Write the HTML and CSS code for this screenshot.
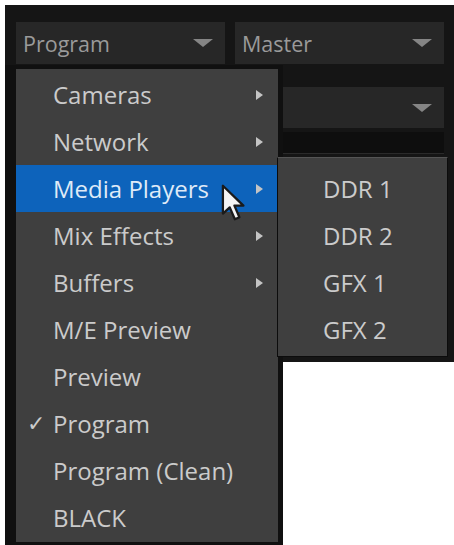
FILE: index.html
```html
<!DOCTYPE html>
<html>
  <head>
    <title>Output Source</title>
    <link rel="stylesheet" href="styles.css">
  </head>
  <body>
    <div class="panel">
      <div class="row">
        <div class="select"><span>Program</span><i class="caret"></i></div>
        <div class="select"><span>Master</span><i class="caret"></i></div>
      </div>
      <div class="row row-wide">
        <div class="select"><span></span><i class="caret"></i></div>
      </div>
      <div class="band"></div>
    </div>

    <!-- source menu, opened over the selects -->
    <div class="menu-frame">
      <ul class="menu">
        <li class="has-sub">Cameras</li>
        <li class="has-sub">Network</li>
        <li class="has-sub active">Media Players</li>
        <li class="has-sub">Mix Effects</li>
        <li class="has-sub">Buffers</li>
        <li>M/E Preview</li>
        <li>Preview</li>
        <li class="checked">Program</li>
        <li>Program (Clean)</li>
        <li>BLACK</li>
      </ul>
    </div>

    <ul class="submenu">
      <li>DDR 1</li>
      <li>DDR 2</li>
      <li>GFX 1</li>
      <li>GFX 2</li>
    </ul>

    <svg class="cursor" width="30" height="41" viewBox="0 0 26 36">
      <path d="M1.5 1.5 L1.5 26 L7.5 20.5 L12 31 L16 29.2 L11.6 19 L19.5 19 Z" fill="#f4f4f4" stroke="#1a1a1a" stroke-width="2" stroke-linejoin="round"/>
    </svg>
  </body>
</html>
```

FILE: styles.css
```css
*{
  box-sizing: border-box;
}

body{
  margin: 0;
  padding: 5px 0 0 5px;
  background-color: white;
  font-family: "Open Sans", "Noto Sans", sans-serif;
}

.panel{
  height: 357px;
  padding: 17px 10px 0 11px;
  background-color: #151515;
}

.row{
  display: grid;
  grid-template-columns: 1fr 1fr;
  column-gap: 10px;
  height: 42px;
}

.row-wide{
  grid-template-columns: 1fr;
  height: 41px;
  margin-top: 23px;
}

.band{
  height: 22px;
  margin-top: 4px;
  background-color: #0e0e0e;
  border-bottom: 1px solid #2a2a2a;
}

.select{
  display: flex;
  align-items: center;
  justify-content: space-between;
  padding: 0 12px 0 7px;
  background-color: #272727;
  color: #9a9a9a;
  font-size: 21.5px;
}

.caret{
  width: 0;
  height: 0;
  border-left: 10px solid transparent;
  border-right: 10px solid transparent;
  border-top: 8px solid #858585;
}

.menu-frame{
  position: absolute;
  left: 5px;
  top: 65px;
  width: 278px;
  height: 480px;
  padding: 4px 5px 3px 11px;
  background-color: #101010;
}

.menu, .submenu{
  list-style: none;
  margin: 0;
  background-color: #3f3f3f;
  color: #cbcbcb;
  font-size: 24px;
}

.menu{
  height: 473px;
  padding: 2px 0 0 0;
}

.menu li, .submenu li{
  position: relative;
  height: 47px;
  line-height: 47px;
}

.menu li{
  padding-left: 37px;
}

.menu li.active{
  background-color: #0d63bb;
  color: #dfeaf7;
}

.has-sub:after{
  content: "";
  position: absolute;
  left: 240px;
  top: 19px;
  border-top: 5px solid transparent;
  border-bottom: 5px solid transparent;
  border-left: 7px solid #c4c4c4;
}

.checked:before{
  content: "\2713";
  position: absolute;
  left: 11px;
  top: 0;
  font-family: "DejaVu Sans", sans-serif;
  font-size: 22px;
}

.submenu{
  position: absolute;
  left: 277px;
  top: 157px;
  width: 171px;
  height: 200px;
  padding: 7px 0 0 0;
  border: 1px solid #0c0c0c;
  border-top-color: #555;
}

.submenu li{
  padding-left: 45px;
}

.cursor{
  position: absolute;
  left: 221px;
  top: 184px;
}
```
